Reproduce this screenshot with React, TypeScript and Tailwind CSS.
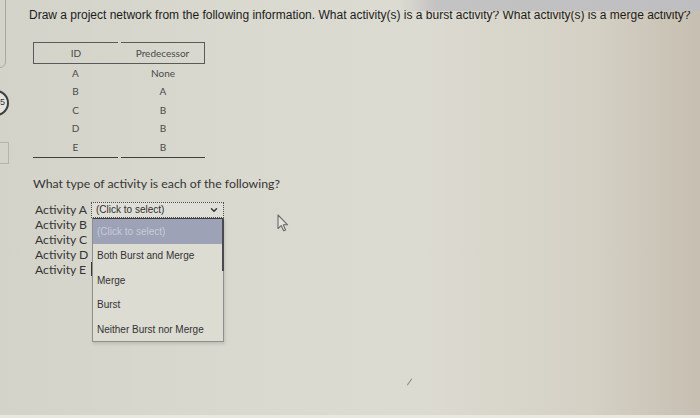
import { ChevronDown } from "lucide-react";

const rows = [
  { id: "A", pred: "None" },
  { id: "B", pred: "A" },
  { id: "C", pred: "B" },
  { id: "D", pred: "B" },
  { id: "E", pred: "B" },
];

const options = ["Both Burst and Merge", "Merge", "Burst", "Neither Burst nor Merge"];

const activities = ["Activity A", "Activity B", "Activity C", "Activity D", "Activity E"];

const Cursor = () => (
  <svg width="13" height="18" viewBox="0 0 13 18" className="absolute left-[277px] top-[214px]">
    <path
      d="M1 1 L1 14.5 L4.2 11.6 L6.6 16.8 L8.6 15.9 L6.3 10.8 L10.6 10.8 Z"
      fill="#e4e3dc"
      stroke="#6b6b6e"
      strokeWidth="1.1"
      strokeLinejoin="round"
    />
  </svg>
);

export default function App() {
  return (
    <div className="relative w-[700px] h-[418px] overflow-hidden bg-[linear-gradient(90deg,#d4d3ca_0%,#dad9cf_35%,#dcdbd1_60%,#d4d0c4_85%,#c6bfb1_100%)] font-['Liberation_Sans',Arial,sans-serif]">
      {/* bits of the screen edge in the photo */}
      <div className="absolute top-0 right-0 w-[300px] h-[11px] bg-[linear-gradient(90deg,transparent,#c4c3c3_12%,#bebdc0)]" />
      <div className="absolute bottom-0 left-0 w-full h-[3px] bg-[#e9e8e0]" />
      <div className="absolute left-[-22px] top-[-10px] w-[28px] h-[78px] rounded-md border border-[#a9a8a4]" />
      <div className="absolute left-[-17px] top-[90px] w-[26px] h-[26px] rounded-full border-2 border-[#3d3d3d] bg-[#e3e3e1] flex items-center justify-end pr-[2px] text-[9px] text-[#333]">
        5
      </div>
      <div className="absolute left-[-10px] top-[142px] w-[19px] h-[22px] border border-[#b5b4ae]" />

      <div className="pl-[29px] pt-[8px]">
        <p className="text-[12px] leading-[14px] text-[#1c1c1c] whitespace-nowrap">
          Draw a project network from the following information. What activity(s) is a burst activity? What activity(s) is a merge activity?
        </p>

        {/* table */}
        <div className="ml-[4px] mt-[20px] w-[172px] font-['Lato',sans-serif] text-[10px] text-[#4a4a4a]">
          <div className="flex h-[22px]">
            <div className="w-[85px] flex items-center justify-center border-y border-l border-[#5a5a5a]">ID</div>
            <div className="w-[3px] border-b border-[#5a5a5a]" />
            <div className="w-[84px] flex items-center justify-center border-y border-r border-[#5a5a5a]">Predecessor</div>
          </div>
          {rows.map((r) => (
            <div key={r.id} className="flex h-[18.5px] items-center">
              <div className="w-[85px] text-center">{r.id}</div>
              <div className="w-[3px]" />
              <div className="w-[84px] text-center">{r.pred}</div>
            </div>
          ))}
          <div className="flex">
            <div className="w-[85px] border-t border-[#3f3f3f]" />
            <div className="w-[3px]" />
            <div className="w-[84px] border-t border-[#3f3f3f]" />
          </div>
        </div>

        <p className="ml-[4px] mt-[18px] font-['Lato',sans-serif] text-[12.3px] leading-[15px] text-[#353535]">
          What type of activity is each of the following?
        </p>

        <div className="ml-[6px] mt-[11px] flex">
          <div className="w-[56px] font-['Lato',sans-serif] text-[12.2px] leading-[15px] text-[#353535]">
            {activities.map((a) => (
              <div key={a} className="whitespace-nowrap">{a}</div>
            ))}
          </div>

          <div className="relative">
            <div className="w-[133px] h-[16px] border border-dotted border-[#4d4d4d] bg-[#e0dfd7] flex items-center justify-between pl-[4px] pr-[4px] text-[10px] text-[#2e2e2e]">
              <span>(Click to select)</span>
              <ChevronDown size={10} strokeWidth={3.5} className="text-[#333]" />
            </div>
            <div className="absolute left-0 top-[60px] w-[2px] h-[14px] bg-[#3a3a3a]" />

            {/* open option list */}
            <div className="absolute left-[1px] top-[16px] w-[132px] h-[124px] border border-[#8f8f8f] border-t-[#3f3f3f] bg-[#dddcd3] shadow-[1px_2px_3px_rgba(0,0,0,0.12)] text-[10px] text-[#333]">
              <div className="absolute right-[-1px] top-0 w-[2px] h-[52px] bg-[#4a4a4e]" />
              <div className="h-[25px] bg-[#9da2b6] flex items-center pl-[4px] text-[#c9cbd8]">(Click to select)</div>
              {options.map((o) => (
                <div key={o} className="h-[24.5px] flex items-center pl-[4px]">
                  {o}
                </div>
              ))}
            </div>
          </div>
        </div>
      </div>

      <Cursor />
      <div className="absolute left-[409px] top-[378px] w-[1px] h-[8px] rotate-[35deg] bg-[#8a8a84]" />
    </div>
  );
}
